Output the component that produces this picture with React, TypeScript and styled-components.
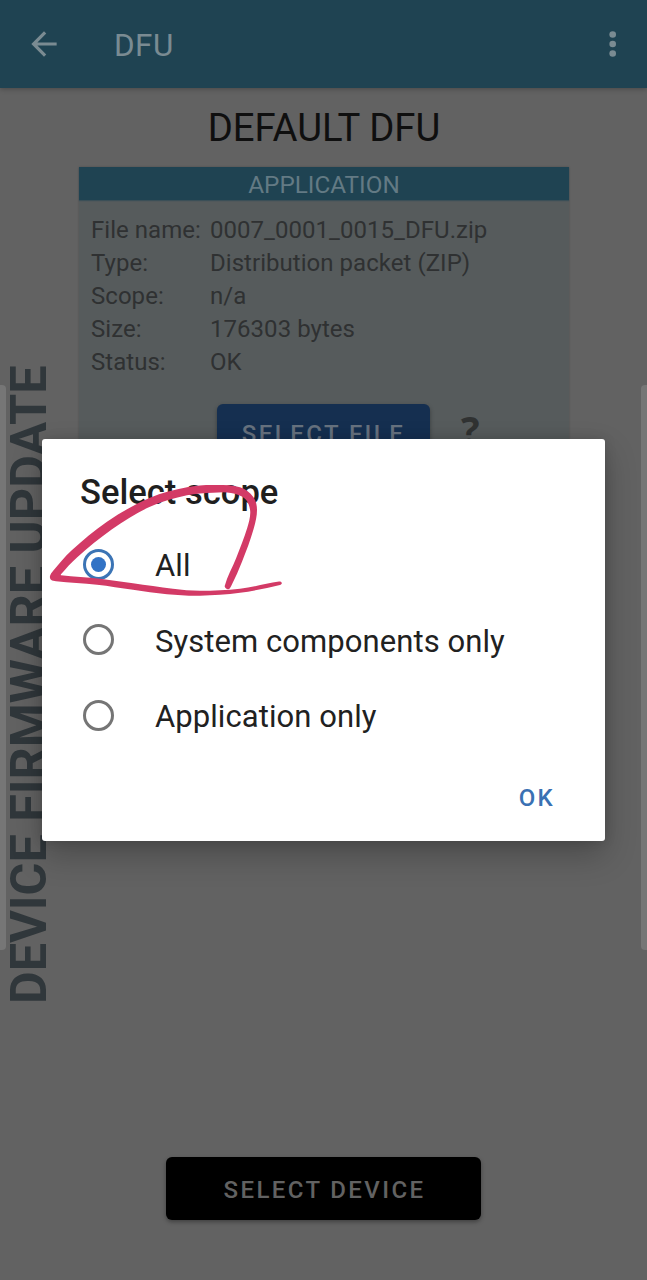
import React, { useState } from "react";
import styled, { createGlobalStyle } from "styled-components";

const GlobalStyle = createGlobalStyle`
  * { box-sizing: border-box; }
  body { margin: 0; background: #626262; font-family: Roboto, "Liberation Sans", sans-serif; }
  button { font: inherit; border: 0; padding: 0; background: none; }
  h1, h2, h3, p, dl, dd, dt { margin: 0; font-weight: 400; }
`;

const Screen = styled.div`
  position: relative;
  display: flex;
  flex-direction: column;
  width: 647px;
  height: 1280px;
  overflow: hidden;
  background: #626262;
`;

const AppBar = styled.header`
  display: flex;
  align-items: center;
  flex: none;
  height: 88px;
  padding: 0 15px 0 25px;
  background: #1f4352;
  box-shadow: 0 1px 5px rgba(0, 0, 0, 0.28);
  color: #7a8b92;
`;

const IconButton = styled.button<{ $size: number }>`
  display: flex;
  width: ${(p) => p.$size}px;
  height: ${(p) => p.$size}px;
  color: inherit;
`;

const AppTitle = styled.h1`
  flex: 1;
  margin-left: 51px;
  padding-top: 3px;
  font-size: 31.4px;
  line-height: 36px;
  letter-spacing: 0.5px;
`;

const Body = styled.div`
  display: grid;
  grid-template-columns: 79px 490px 1fr;
  flex: 1;
`;

const Rail = styled.div`
  display: flex;
  justify-content: center;
  padding: 274px 0 0;
  height: 916px;
  width: 57px;
`;

const RailLabel = styled.span`
  writing-mode: vertical-rl;
  transform: rotate(180deg);
  font-size: 50.3px;
  line-height: 56px;
  font-weight: 700;
  white-space: nowrap;
  color: #30373b;
`;

const Main = styled.main`
  display: flex;
  flex-direction: column;
  align-items: center;
`;

const PageTitle = styled.h2`
  height: 79px;
  line-height: 80px;
  font-size: 38.3px;
  color: #0f0f0f;
`;

const Card = styled.section`
  width: 100%;
  height: 340px;
  background: #565b5c;
  box-shadow: 0 0 2px rgba(0, 0, 0, 0.2);
`;

const CardHeader = styled.h3`
  height: 33px;
  line-height: 36px;
  font-size: 24.3px;
  text-align: center;
  background: #1f4352;
  color: #637a84;
  box-shadow: 0 1px 1px rgba(31, 67, 82, 0.5);
`;

const Details = styled.dl`
  display: grid;
  grid-template-columns: 119px 1fr;
  grid-auto-rows: 33px;
  padding: 13px 0 0 12px;
  font-size: 24px;
  line-height: 34px;
  letter-spacing: 0.04px;
  white-space: nowrap;
  color: #2f3132;
`;

const CardActions = styled.div`
  display: flex;
  align-items: center;
  gap: 31px;
  padding: 26px 0 0 138px;
`;

const Button = styled.button<{ $tone: "blue" | "black" }>`
  display: flex;
  align-items: center;
  justify-content: center;
  width: ${(p) => (p.$tone === "blue" ? 213 : 315)}px;
  height: ${(p) => (p.$tone === "blue" ? 57 : 63)}px;
  padding: 3px 0 0 ${(p) => (p.$tone === "blue" ? 0 : 2)}px;
  border-radius: 6px;
  background: ${(p) => (p.$tone === "blue" ? "#152f50" : "#000")};
  color: ${(p) => (p.$tone === "blue" ? "#66717e" : "#626262")};
  font-size: 24px;
  font-weight: 500;
  letter-spacing: ${(p) => (p.$tone === "blue" ? 2.45 : 2.4)}px;
  box-shadow: 0 2px 4px rgba(0, 0, 0, 0.35);
`;

const Help = styled.span`
  margin-top: -6px;
  font-family: "Open Sans", sans-serif;
  font-size: 39px;
  line-height: 51px;
  font-weight: 700;
  color: #303232;
`;

const Footer = styled.footer`
  display: flex;
  justify-content: center;
  flex: none;
  height: 123px;
`;

const EdgeHandle = styled.div<{ $side: "left" | "right" }>`
  position: absolute;
  top: 385px;
  ${(p) => p.$side}: 0;
  width: 6px;
  height: 565px;
  border-radius: ${(p) => (p.$side === "left" ? "0 4px 4px 0" : "4px 0 0 4px")};
  background: #767676;
`;

const Dialog = styled.div`
  position: absolute;
  top: 439px;
  left: 42px;
  display: flex;
  flex-direction: column;
  width: 563px;
  height: 402px;
  padding: 35px 38px 0;
  border-radius: 3px;
  background: #fff;
  box-shadow: 0 14px 32px rgba(0, 0, 0, 0.24), 0 0 12px rgba(0, 0, 0, 0.14);
`;

const DialogTitle = styled.h2`
  height: 52.4px;
  font-size: 34.6px;
  line-height: 36px;
  font-weight: 500;
  color: #1f1f1f;
`;

const Option = styled.button`
  display: flex;
  align-items: center;
  height: 75.6px;
  gap: 41px;
  padding-left: 3px;
  font-size: 31px;
  letter-spacing: 0.07px;
  color: #212121;
  white-space: nowrap;
`;

const OptionLabel = styled.span`
  padding-top: 3px;
`;

const Radio = styled.span<{ $on: boolean }>`
  display: flex;
  align-items: center;
  justify-content: center;
  width: 31px;
  height: 31px;
  border: 3px solid ${(p) => (p.$on ? "#3b74b5" : "#757575")};
  border-radius: 50%;

  &::after {
    content: "";
    width: 15px;
    height: 15px;
    border-radius: 50%;
    background: ${(p) => (p.$on ? "#3273c5" : "transparent")};
  }
`;

const Confirm = styled.button`
  align-self: flex-end;
  margin: 30.6px 12px 0 0;
  font-size: 24px;
  line-height: 28px;
  font-weight: 500;
  letter-spacing: 2.3px;
  color: #3a71b3;
`;

const Scribble = styled.svg`
  position: absolute;
  top: 41px;
  left: 0;
  pointer-events: none;
`;

const details = [
  ["File name:", "0007_0001_0015_DFU.zip"],
  ["Type:", "Distribution packet (ZIP)"],
  ["Scope:", "n/a"],
  ["Size:", "176303 bytes"],
  ["Status:", "OK"],
];

const scopes = ["All", "System components only", "Application only"];

type Point = [number, number];

// Outline of the pen stroke; its width changes along the way.
const strokeOutline: Point[] = [
  [50, 576], [53, 571], [71.5, 550.5], [107, 521.7], [150, 497.7], [187, 487.2], [213, 485],
  [240, 487.3], [253.3, 497], [257, 510], [253.3, 530], [242.3, 561], [231.2, 586], [228, 589.3],
  [224.7, 586], [236.2, 558], [247.2, 528], [250.2, 511], [245, 498.7], [231, 493],
  [213, 492.8], [187, 495.3], [150, 506.7], [112, 529.3], [77, 557.5], [61, 574.2], [61, 575.3],
  [100, 578.8], [133, 583.3], [173, 588.8], [200, 590.8], [240, 588.8], [279, 581.6], [281.8, 583],
  [280, 585], [240, 592.8], [200, 595.7], [167, 594.2], [133, 589.7], [97, 584.7], [56, 581.3],
  [51, 579.8],
];

function smoothPath(points: Point[]) {
  const at = (i: number) => points[(i + points.length) % points.length];
  let d = `M${points[0].join(" ")}`;
  points.forEach((p, i) => {
    const prev = at(i - 1);
    const next = at(i + 1);
    const after = at(i + 2);
    const len = Math.hypot(next[0] - p[0], next[1] - p[1]);
    const handle = (a: Point, b: Point, origin: Point, sign: number) => {
      const span = Math.hypot(b[0] - a[0], b[1] - a[1]) || 1;
      const k = (sign * len) / (3 * span);
      return `${(origin[0] + (b[0] - a[0]) * k).toFixed(2)} ${(origin[1] + (b[1] - a[1]) * k).toFixed(2)}`;
    };
    d += `C${handle(prev, next, p, 1)} ${handle(p, after, next, -1)} ${next.join(" ")}`;
  });
  return d + "Z";
}

export default function App() {
  const [scope, setScope] = useState(scopes[0]);

  return (
    <Screen>
      <GlobalStyle />
      <AppBar>
        <IconButton $size={38} aria-label="Back">
          <svg width="38" height="38" viewBox="0 0 24 24" fill="currentColor">
            <path d="M20 11H7.83l5.59-5.59L12 4l-8 8 8 8 1.41-1.41L7.83 13H20v-2z" />
          </svg>
        </IconButton>
        <AppTitle>DFU</AppTitle>
        <IconButton $size={38} aria-label="More options">
          <svg width="38" height="38" viewBox="0 0 24 24" fill="currentColor">
            <circle cx="11.8" cy="6" r="2.1" />
            <circle cx="11.8" cy="12" r="2.1" />
            <circle cx="11.8" cy="18" r="2.1" />
          </svg>
        </IconButton>
      </AppBar>

      <Body>
        <Rail>
          <RailLabel>DEVICE FIRMWARE UPDATE</RailLabel>
        </Rail>
        <Main>
          <PageTitle>DEFAULT DFU</PageTitle>
          <Card>
            <CardHeader>APPLICATION</CardHeader>
            <Details>
              {details.map(([name, value]) => (
                <React.Fragment key={name}>
                  <dt>{name}</dt>
                  <dd>{value}</dd>
                </React.Fragment>
              ))}
            </Details>
            <CardActions>
              <Button $tone="blue">SELECT FILE</Button>
              <Help>?</Help>
            </CardActions>
          </Card>
        </Main>
      </Body>

      <Footer>
        <Button $tone="black">SELECT DEVICE</Button>
      </Footer>

      <EdgeHandle $side="left" />
      <EdgeHandle $side="right" />

      <Dialog role="dialog">
        <DialogTitle>Select scope</DialogTitle>
        {scopes.map((name) => (
          <Option key={name} onClick={() => setScope(name)}>
            <Radio $on={name === scope} />
            <OptionLabel>{name}</OptionLabel>
          </Option>
        ))}
        <Confirm>OK</Confirm>
        <Scribble width="260" height="130" viewBox="42 480 260 130" fill="#d33a66">
          <path d={smoothPath(strokeOutline)} />
        </Scribble>
      </Dialog>
    </Screen>
  );
}
